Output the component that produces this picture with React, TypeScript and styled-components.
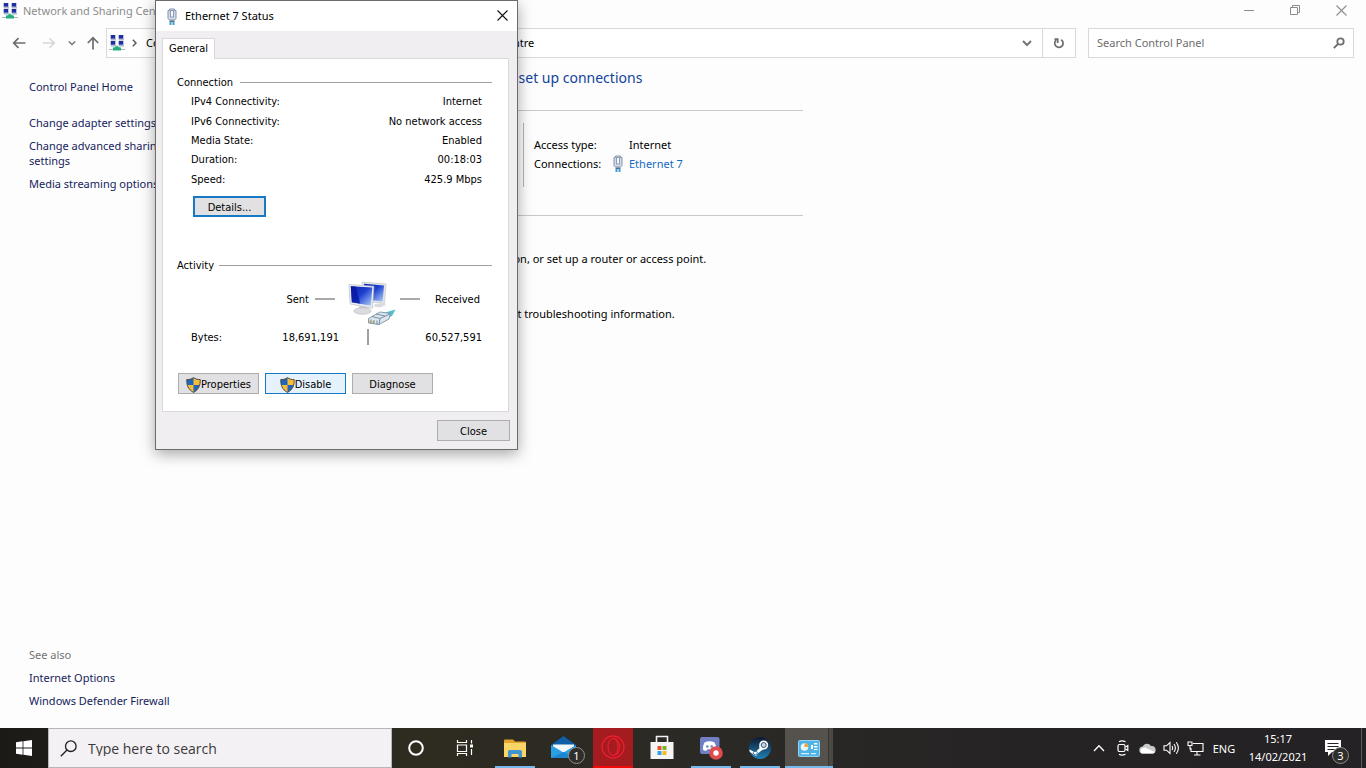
import React from 'react';
import styled, { createGlobalStyle, css } from 'styled-components';

const GlobalStyle = createGlobalStyle`
  *, *::before, *::after { box-sizing: border-box; }
  body { margin: 0; }
  button, input { font: inherit; color: inherit; }
  a { color: inherit; text-decoration: none; }
  h1, h2, p, ul { margin: 0; padding: 0; font-weight: 400; }
  ul { list-style: none; }
`;

const Desktop = styled.div`
  display: flex;
  flex-direction: column;
  min-height: 100vh;
  position: relative;
  background: #fdfdfd;
  color: #000;
  font: 11px/15px 'Noto Sans', 'Open Sans', sans-serif;
  overflow: hidden;
`;

const BareButton = styled.button`
  display: flex;
  align-items: center;
  justify-content: center;
  padding: 0;
  border: 0;
  background: none;
`;

/* ---------- Control panel window ---------- */

const ExplorerWindow = styled.main`
  flex: 1;
  display: flex;
  flex-direction: column;
`;

const WindowTitleBar = styled.header`
  display: flex;
  align-items: center;
  height: 22px;
  margin-bottom: 6px;
  padding: 0 2px 0 2px;
  gap: 5px;
  color: #8c8c8c;
`;

const WindowTitle = styled.h1`
  flex: 1;
  font-size: 11px;
  line-height: 16px;
`;

const WindowControls = styled.div`
  display: flex;
  align-self: flex-start;
`;

const WindowControl = styled(BareButton)`
  width: 46px;
  height: 20px;
`;

const NavBar = styled.nav`
  display: flex;
  height: 30px;
  padding-right: 12px;
`;

const NavArrows = styled.div`
  display: flex;
  align-items: center;
  width: 106px;
  padding-left: 12px;
`;

const NavArrow = styled(BareButton)<{ $width: number }>`
  width: ${(p) => p.$width}px;
  height: 28px;
  justify-content: flex-start;
`;

const AddressBar = styled.div`
  flex: 1;
  display: flex;
  align-items: center;
  min-width: 0;
  padding-left: 2px;
  border: 1px solid #d9d9d9;
  background: #fff;
`;

const Crumbs = styled.div`
  flex: 1;
  display: flex;
  align-items: center;
  margin-left: 7px;
  padding-bottom: 1px;
  gap: 9px;
  white-space: nowrap;
`;

const CrumbLink = styled.a`
  margin-right: 4px;
`;

const AddressButton = styled(BareButton)<{ $divided?: boolean }>`
  width: ${(p) => (p.$divided ? 33 : 31)}px;
  align-self: stretch;
  border-left: ${(p) => (p.$divided ? '1px solid #d9d9d9' : '0')};
`;

const SearchBox = styled.label`
  display: flex;
  align-items: center;
  width: 266px;
  margin-left: 12px;
  padding: 0 8px 1px;
  border: 1px solid #d9d9d9;
  background: #fff;
`;

const SearchInput = styled.input`
  flex: 1;
  min-width: 0;
  padding: 0;
  border: 0;
  outline: 0;
  background: none;
  &::placeholder { color: #6d6d6d; opacity: 1; }
`;

const Body = styled.div`
  flex: 1;
  display: flex;
`;

const Sidebar = styled.aside`
  display: flex;
  flex-direction: column;
  justify-content: space-between;
  flex: none;
  width: 193px;
  padding: 21px 12px 20px 29px;
  color: #151c5c;
`;

const LinkList = styled.ul`
  display: flex;
  flex-direction: column;
  gap: 8px;
`;

const HomeItem = styled.li`
  margin-bottom: 13px;
`;

const SeeAlsoLabel = styled.li`
  color: #747474;
`;

const Content = styled.section`
  width: 610px;
  padding: 9px 0 0 52px;
`;

const Heading = styled.h2`
  color: #10439b;
  font-size: 14px;
  line-height: 22px;
  white-space: nowrap;
`;

const ActiveNetwork = styled.div`
  display: flex;
  justify-content: flex-end;
  margin-top: 21px;
  height: 106px;
  padding-top: 12px;
  border: solid #c9c9c9;
  border-width: 1px 0;
`;

const NetworkFacts = styled.dl`
  display: grid;
  grid-template-columns: 79px 16px 1fr;
  align-content: start;
  row-gap: 4px;
  width: 280px;
  height: 64px;
  margin: 0;
  padding: 14px 0 0 10px;
  border-left: 1px solid #b5b5b5;
`;

const FactLabel = styled.dt`
  white-space: nowrap;
`;

const FactIcon = styled.span`
  display: flex;
  align-items: center;
  height: 15px;
`;

const FactValue = styled.dd`
  margin: 0;
`;

const AdapterLink = styled.a`
  color: #1769c2;
`;

const Hints = styled.div`
  display: flex;
  flex-direction: column;
  gap: 40px;
  margin-top: 35px;
  padding-left: 40px;
  white-space: nowrap;
`;

/* ---------- Status dialog ---------- */

const Dialog = styled.section`
  position: absolute;
  left: 155px;
  top: 0;
  width: 363px;
  border: 1px solid #6b6a6c;
  background: #f0eef0;
  color: #000;
  font: 11px/15px 'DejaVu Sans Condensed', 'DejaVu Sans', sans-serif;
  box-shadow: 0 4px 14px rgba(0, 0, 0, 0.34);
`;

const DialogTitleBar = styled.header`
  display: flex;
  align-items: center;
  height: 30px;
  padding-left: 11px;
  background: #fff;
  font: 11px/16px 'Noto Sans', 'Open Sans', sans-serif;
`;

const DialogTitle = styled.h2`
  flex: 1;
  margin-left: 8px;
  font-size: 11px;
`;

const DialogClose = styled(BareButton)`
  width: 30px;
  height: 28px;
  padding-bottom: 2px;
`;

const DialogBody = styled.div`
  padding: 7px 7px 8px 6px;
`;

const Tab = styled.button`
  display: block;
  position: relative;
  width: 53px;
  height: 21px;
  margin-bottom: -1px;
  padding: 0 0 2px;
  border: 1px solid #d9d8da;
  border-bottom: 0;
  background: #fff;
`;

const TabPanel = styled.div`
  height: 354px;
  margin-right: 1px;
  padding: 16px 16px 0 14px;
  border: 1px solid #d9d8da;
  background: #fff;
`;

const GroupTitle = styled.h2<{ $gap: number }>`
  display: flex;
  align-items: center;
  gap: ${(p) => p.$gap}px;
  font-size: 11px;
  line-height: 15px;
  &::after {
    content: '';
    flex: 1;
    height: 1px;
    background: #a0a0a0;
  }
`;

const StatusTable = styled.table`
  width: 291px;
  height: 97px;
  margin: 2px 0 0 14px;
  border-collapse: collapse;
  th, td { padding: 0; font-weight: 400; }
  th { text-align: left; }
  td { text-align: right; }
`;

const pushBorder = {
  plain: css`border: 1px solid #adacae; background: #e1e0e2;`,
  focused: css`border: 2px solid #1779c4; background: #e1e0e2;`,
  hover: css`border: 1px solid #1779c4; background: #e5f1fb;`,
};

const PushButton = styled.button<{ $look?: keyof typeof pushBorder; $width: number }>`
  display: flex;
  align-items: center;
  justify-content: center;
  width: ${(p) => p.$width}px;
  height: 21px;
  padding: 2px 0 0;
  ${(p) => pushBorder[p.$look ?? 'plain']}
`;

const DetailsRow = styled.div`
  margin: 7px 0 41px 16px;
`;

const Activity = styled.div`
  display: grid;
  grid-template-columns: 148px 57px 1fr;
  align-items: center;
  justify-items: end;
  margin: 8px 10px 0 14px;
`;

const Flow = styled.div`
  display: flex;
  align-items: center;
  justify-content: space-between;
  width: 100%;
`;

const SentFlow = styled(Flow)`
  justify-content: flex-end;
  gap: 6px;
  padding: 0 4px 12px 0;
`;

const ReceivedFlow = styled(Flow)`
  padding: 0 2px 12px 4px;
`;

const Dash = styled.span`
  width: 20px;
  height: 2px;
  background: #a9a9a9;
`;

const Bar = styled.span`
  justify-self: center;
  width: 2px;
  height: 16px;
  background: #a0a0a0;
`;

const ActionRow = styled.div`
  display: flex;
  gap: 6px;
  margin: 28px 0 0 1px;
`;

const DialogFooter = styled.div`
  display: flex;
  justify-content: flex-end;
  margin-top: 8px;
`;

/* ---------- Taskbar ---------- */

const Taskbar = styled.footer`
  display: flex;
  height: 40px;
  background: linear-gradient(90deg, #1c1a17 0, #2e2b20 30%, #2b2926 55%, #252324 75%, #242224 100%);
  color: #fff;
`;

const StartButton = styled(BareButton)`
  width: 48px;
`;

const TaskSearch = styled.label`
  display: flex;
  align-items: center;
  width: 344px;
  padding-left: 11px;
  gap: 11px;
  border: 1px solid #b9b7b5;
  background: #f3f1f4;
  color: #2b2b2b;
  font-family: 'Open Sans', 'Noto Sans', sans-serif;
  font-size: 14px;
`;

const TaskSearchInput = styled(SearchInput)`
  &::placeholder { color: #3a3a3a; }
`;

const SystemButton = styled(BareButton)`
  width: 48px;
`;

const PinnedApps = styled.div`
  display: flex;
  gap: 1px;
  margin-left: 3px;
`;

const AppButton = styled(BareButton)<{ $running?: boolean; $active?: boolean }>`
  position: relative;
  width: 48px;
  background: ${(p) =>
    p.$active ? 'linear-gradient(90deg, #55524e 0 43px, #37352f 43px 44px, #4a4744 44px)' : 'none'};
  &::after {
    content: '';
    display: ${(p) => (p.$running ? 'block' : 'none')};
    position: absolute;
    left: ${(p) => (p.$active ? 0 : 4)}px;
    right: ${(p) => (p.$active ? 0 : 4)}px;
    bottom: 0;
    height: 2px;
    background: #76b9ed;
  }
`;

const OperaTile = styled.span`
  display: flex;
  align-items: center;
  justify-content: center;
  width: 40px;
  height: 40px;
  background: #a41b20;
  border-bottom: 2px solid #f00a0a;
`;

const Badge = styled.span<{ $right: number }>`
  position: absolute;
  right: ${(p) => p.$right}px;
  bottom: 4px;
  width: 17px;
  height: 17px;
  border: 1px solid #8f8f8f;
  border-radius: 50%;
  background: #2f2e2b;
  font-size: 11px;
  line-height: 15px;
  text-align: center;
`;

const Tray = styled.div`
  display: flex;
  align-items: center;
  margin-left: auto;
`;

const TrayButton = styled(BareButton)`
  width: 24px;
  height: 40px;
`;

const Language = styled.button`
  width: 34px;
  height: 40px;
  padding: 0;
  border: 0;
  background: none;
`;

const Clock = styled.time`
  width: 74px;
  line-height: 18px;
  text-align: center;
`;

const Notifications = styled(BareButton)`
  position: relative;
  width: 46px;
  height: 40px;
  padding-right: 10px;
`;

const ShowDesktop = styled.button`
  width: 5px;
  height: 40px;
  padding: 0;
  border: 0;
  border-left: 1px solid #5a595a;
  background: none;
`;

/* ---------- Drawings ---------- */

const NetworkIcon = () => (
  <svg width="16" height="16" viewBox="0 0 16 16" aria-hidden="true">
    {[[1, 0], [9, 0], [1, 6], [9, 6]].map(([x, y]) => (
      <g key={`${x}-${y}`}>
        <rect x={x} y={y} width="6" height="4.4" fill="#b9c6e6" />
        <rect x={x + 1} y={y} width="4" height="3.6" fill="#1f2da0" />
        <rect x={x + 1} y={y + 4.4} width="5" height="1" fill="#8f9bb5" />
      </g>
    ))}
    <path d="M8 10.500l3.500 3H4.500z" fill="#23b07d" />
    <rect x="0" y="14" width="16" height="1" fill="#a9b5bb" />
    <rect x="4" y="12.500" width="8" height="3" fill="#23b07d" />
  </svg>
);

const PlugIcon = () => (
  <svg width="10" height="17" viewBox="0 0 10 17" aria-hidden="true">
    <path d="M1 2.500h1.500V1h5v1.500H9v8L7.500 12h-5L1 10.500z" fill="#d3dcea" stroke="#8592ab" />
    <rect x="3.500" y="2.500" width="3" height="6.500" fill="#f4f7fb" stroke="#8e9bb4" />
    <path d="M2.500 12.500h5V14h-5z" fill="#56708e" />
    <path d="M2.500 14h2v3h-2zM5.500 14h2v3h-2z" fill="#3ba0d4" />
  </svg>
);

const ShieldIcon = () => (
  <svg width="15" height="16" viewBox="0 0 15 16" aria-hidden="true">
    <path d="M7.500.600C5.500 2.200 3.200 2.700.8 2.500c-.2 5.500 1.200 10 6.700 12.900 5.500-2.900 6.900-7.400 6.700-12.900C11.800 2.700 9.500 2.200 7.500.600z" fill="#f6bd3c" />
    <path d="M7.500.600C5.500 2.200 3.200 2.700.8 2.500c0 2 .1 3.900.7 5.500h6zM7.500 8v7.400c3.200-1.700 5-4.200 6-7.400z" fill="#1f66b8" />
    <path d="M7.500.600C5.500 2.200 3.200 2.700.8 2.500c-.2 5.500 1.200 10 6.700 12.900 5.500-2.900 6.900-7.400 6.700-12.900C11.800 2.700 9.500 2.200 7.500.600z" fill="none" stroke="#4c4a45" />
  </svg>
);

const ComputersIcon = () => (
  <svg width="48" height="48" viewBox="0 0 48 48" aria-hidden="true">
    <defs>
      <linearGradient id="screen" x1="0" y1="0" x2="1" y2="1">
        <stop offset="0" stopColor="#0a1fae" />
        <stop offset=".45" stopColor="#1d3fd0" />
        <stop offset="1" stopColor="#b4d3fa" />
      </linearGradient>
    </defs>
    <path d="M14 1l24 2-1.500 19.500L16 20z" fill="#e3e5e9" stroke="#bcc0c6" strokeWidth=".6" />
    <path d="M16 2.800l20 1.600-1.300 16L18 18.500z" fill="url(#screen)" />
    <path d="M27 23l8-1 3 2-6 2.500-6-1z" fill="#d9dbde" />
    <path d="M1 3.500l25 1.700-1.500 22L2 23z" fill="#e9ebee" stroke="#b4b8be" strokeWidth=".6" />
    <path d="M2.800 5.200l21.500 1.400-1.500 18.200L3.800 21.200z" fill="url(#screen)" />
    <path d="M2.800 5.200l5 .4 4.500 17.200-8.500-1.600z" fill="#0715a0" opacity=".75" />
    <path d="M11 25l8 1.300 1 3h-8z" fill="#c3c6ca" />
    <ellipse cx="14.500" cy="30" rx="8.500" ry="3.300" fill="#dadcdf" stroke="#b3b6ba" strokeWidth=".6" />
    <path d="M34 32.500l13.500-4-3.500 6.500-5 2z" fill="#4fc0cc" />
    <path d="M20.500 37.500L32 31l10.500 1.500L41 38l-10 5.500L20.500 42z" fill="#dce6ee" stroke="#7a93a8" strokeWidth=".9" />
    <path d="M24 35.500l8 2L42 33M32 37.500l-1 6M28 33l9 2M23 38.500v4M26 39v4M29 39.500v4" fill="none" stroke="#6d879c" strokeWidth=".9" />
    <path d="M21.500 39.500H23V42h-1.500zM24.500 40H26v2.500h-1.500z" fill="#b9a85a" />
  </svg>
);

const BackArrow = ({ color }: { color: string }) => (
  <svg width="14" height="12" viewBox="0 0 14 12" fill="none" stroke={color} strokeWidth="1.700" aria-hidden="true">
    <path d="M13.500 6H2M6.500 1.200L1.700 6l4.800 4.800" />
  </svg>
);

const ForwardArrow = () => (
  <svg width="14" height="12" viewBox="0 0 14 12" fill="none" stroke="#d5d5d5" strokeWidth="1.500" aria-hidden="true">
    <path d="M1 6h11M7.500 1.200L12.300 6l-4.800 4.800" />
  </svg>
);

const UpArrow = () => (
  <svg width="14" height="14" viewBox="0 0 14 14" fill="none" stroke="#6d6d6d" strokeWidth="1.700" aria-hidden="true">
    <path d="M7 13.500V2M1.800 7L7 1.700 12.200 7" />
  </svg>
);

const Caret = ({ size, weight }: { size: number; weight: number }) => (
  <svg width={size} height={size} viewBox="0 0 10 10" fill="none" stroke="#757575" strokeWidth={weight} aria-hidden="true">
    <path d="M1 3l4 4 4-4" />
  </svg>
);

const CrumbChevron = () => (
  <svg width="5" height="8" viewBox="0 0 5 8" fill="none" stroke="#555" strokeWidth="1.400" aria-hidden="true">
    <path d="M.8.800L4 4 .8 7.200" />
  </svg>
);

const RefreshIcon = () => (
  <svg width="12" height="12" viewBox="0 0 12 12" fill="none" stroke="#6d6d6d" strokeWidth="1.700" aria-hidden="true">
    <path d="M8.200 2.700A4.200 4.200 0 1 1 3.200 3" />
    <path d="M4.700 6V2.200H1.500" />
  </svg>
);

const Magnifier = () => (
  <svg width="12" height="12" viewBox="0 0 12 12" fill="none" stroke="#6d6d6d" strokeWidth="1.800" aria-hidden="true">
    <circle cx="7.500" cy="4.500" r="3.200" />
    <path d="M5 7L.8 11.200" />
  </svg>
);

const TaskMagnifier = () => (
  <svg width="17" height="17" viewBox="0 0 17 17" fill="none" stroke="#1e1e1e" strokeWidth="1.300" aria-hidden="true">
    <circle cx="10.800" cy="6.200" r="5.300" />
    <path d="M7 10L.8 16.200" />
  </svg>
);

const WindowsLogo = () => (
  <svg width="16" height="16" viewBox="0 0 16 16" fill="#fff" aria-hidden="true">
    <path d="M0 2.200l6.600-.9v6.200H0zM7.400 1.200L16 0v7.500H7.400zM0 8.400h6.600v6.300L0 13.800zM7.400 8.400H16V16l-8.600-1.200z" />
  </svg>
);

const TaskViewIcon = () => (
  <svg width="17" height="16" viewBox="0 0 17 16" fill="none" stroke="#fff" strokeWidth="1.200" aria-hidden="true">
    <path d="M1.500 0v2.500h9V0M1.500 5v6.500h9V5zM1.500 16v-2.500h9V16M15.500 0v3.500M15.500 9v6" />
    <rect x="14" y="4.500" width="3" height="3" fill="#fff" stroke="none" />
  </svg>
);

const FolderIcon = () => (
  <svg width="22" height="19" viewBox="0 0 22 19" aria-hidden="true">
    <path d="M0 1.500Q0 .5 1 .5h8l2 2h10q1 0 1 1V8H0z" fill="#e3a52b" />
    <rect y="4" width="22" height="14" fill="#fbd467" />
    <path d="M4 18.500v-6Q4 11 5.500 11h11Q18 11 18 12.500v6h-3.500V15h-7v3.500z" fill="#3f94d3" />
  </svg>
);

const MailIcon = () => (
  <svg width="26" height="24" viewBox="0 0 26 24" aria-hidden="true">
    <path d="M0 9L12.500 0 25 9v13H0z" fill="#0f5ea8" />
    <path d="M2 8.500h21v5L12.500 19 2 13z" fill="#f4f8fb" />
    <path d="M0 9l12.500 7.500L25 9v13H0z" fill="#2b9fe3" />
    <path d="M0 22l12.500-6L25 22z" fill="#1c86d1" />
  </svg>
);

const OperaIcon = () => (
  <svg width="24" height="24" viewBox="0 0 24 24" fill="none" stroke="#ea1f2c" aria-hidden="true">
    <circle cx="12" cy="12" r="11" strokeWidth="1.300" />
    <ellipse cx="12" cy="12" rx="5" ry="8.500" strokeWidth="1.200" />
    <path d="M12 3.500c9 0 9 17 0 17" strokeWidth="1.100" />
  </svg>
);

const StoreIcon = () => (
  <svg width="24" height="26" viewBox="0 0 24 26" aria-hidden="true">
    <path d="M6.500 8V1.500h11V8" fill="none" stroke="#f2f2f2" strokeWidth="1.600" />
    <path d="M.5 7h23v17H.500z" fill="#f5f5f5" />
    <path d="M7.500 11h4v4h-4z" fill="#e5532d" />
    <path d="M12.500 11h4v4h-4z" fill="#77b52f" />
    <path d="M7.500 16h4v4h-4z" fill="#2aa3e0" />
    <path d="M12.500 16h4v4h-4z" fill="#f5b81f" />
  </svg>
);

const DiscordIcon = () => (
  <svg width="24" height="24" viewBox="0 0 24 24" aria-hidden="true">
    <path d="M1 3Q1 1 3 1h15.500Q20.500 1 20.500 3v18l-4-3H3Q1 18 1 16z" fill="#7180c4" />
    <path d="M5.500 6.500q5-2.500 10 0 2 3 1.700 7-2 1.500-3.700 1.200l-1-1.500h-4l-1 1.500q-2 .3-3.700-1.200 0-4 1.700-7z" fill="#fff" />
    <circle cx="8.300" cy="10.500" r="1.300" fill="#7180c4" />
    <circle cx="12.700" cy="10.500" r="1.300" fill="#7180c4" />
    <circle cx="17" cy="17" r="6.800" fill="#e04b50" />
    <circle cx="17" cy="17" r="2.700" fill="#fff" />
  </svg>
);

const SteamIcon = () => (
  <svg width="22" height="22" viewBox="0 0 22 22" aria-hidden="true">
    <defs>
      <linearGradient id="steam" x1="0" y1="0" x2="0" y2="1">
        <stop offset="0" stopColor="#10182f" />
        <stop offset="1" stopColor="#1f82b8" />
      </linearGradient>
    </defs>
    <circle cx="11" cy="11" r="11" fill="url(#steam)" />
    <path d="M.3 12.500l6 2.500 5-4.500 1.500 2.700-4.300 3.500Q8 20 5 18 3.500 17 3 16.200L.8 15z" fill="#fff" />
    <path d="M10 10l3-4 4 5-4.500 2.500z" fill="#fff" />
    <circle cx="14.700" cy="8" r="4.500" fill="#fff" />
    <circle cx="14.700" cy="8" r="2.500" fill="#c9d6e2" stroke="#24466b" strokeWidth=".9" />
    <circle cx="6.300" cy="15.800" r="2" fill="none" stroke="#1d5c87" strokeWidth=".8" />
  </svg>
);

const ControlPanelIcon = () => (
  <svg width="22" height="17" viewBox="0 0 22 17" aria-hidden="true">
    <rect x=".5" y=".5" width="21" height="16" rx="1" fill="#4fb3e6" stroke="#90d3f3" />
    <circle cx="6.500" cy="7" r="3.800" fill="#e9f6fc" />
    <path d="M6.500 7V3.200A3.800 3.800 0 0 1 10.300 7z" fill="#f2a33c" />
    <path d="M13 5h2v4h-2zM16 3h3.500v1.500H16zM16 6h3.500v1.500H16zM16 9h3.500v1H16z" fill="#fff" />
    <path d="M3 13h8v1.300H3zM13 13h5v1.300h-5z" fill="#d7f0fb" />
  </svg>
);

const CloudIcon = () => (
  <svg width="17" height="11" viewBox="0 0 17 11" aria-hidden="true">
    <path d="M4 10.500a3.500 3.500 0 0 1-.3-7A4.700 4.700 0 0 1 12 3a3.500 3.500 0 0 1 1.500 7.500z" fill="#c9c9c9" />
    <path d="M3 10.500A3 3 0 0 1 4 5q2-1 4 .5l8 3.500q-1 1.500-2.500 1.500z" fill="#fff" />
  </svg>
);

const MeetNowIcon = () => (
  <svg width="14" height="16" viewBox="0 0 14 16" fill="none" stroke="#fff" strokeWidth="1.200" aria-hidden="true">
    <rect x="2" y="4.500" width="7" height="7" rx="1.500" />
    <path d="M9.500 7l2.300-1.500v5L9.500 9M3 1.800Q6 0 9.500 1.800M3 14.200Q6 16 9.500 14.200" />
  </svg>
);

const VolumeIcon = () => (
  <svg width="17" height="14" viewBox="0 0 17 14" fill="none" stroke="#fff" strokeWidth="1.100" aria-hidden="true">
    <path d="M1 4.800h2.500L7 1.500v11L3.500 9.200H1z" />
    <path d="M9 5q1.300 2 0 4M11 3q2.800 4 0 8M13.300 1.200q4.200 5.800 0 11.600" />
  </svg>
);

const EthernetTrayIcon = () => (
  <svg width="17" height="15" viewBox="0 0 17 15" fill="none" stroke="#fff" strokeWidth="1.100" aria-hidden="true">
    <path d="M6 2.500h10v8H4V7M10 10.500v3M7 14h6.500" />
    <path d="M1 1h4v3.500H1zM3 4.500V8h1" />
  </svg>
);

const MessageIcon = () => (
  <svg width="16" height="16" viewBox="0 0 16 16" aria-hidden="true">
    <path d="M0 0h16v12H7l-4 4v-4H0z" fill="#fff" />
    <path d="M2.500 3.500h11M2.500 6.500h11M2.500 9.500h7" stroke="#242224" />
  </svg>
);

const CloseGlyph = ({ color }: { color: string }) => (
  <svg width="11" height="11" viewBox="0 0 11 11" fill="none" stroke={color} strokeWidth="1.100" aria-hidden="true">
    <path d="M.5.500l10 10M10.500.500l-10 10" />
  </svg>
);

const statusRows = [
  ['IPv4 Connectivity:', 'Internet'],
  ['IPv6 Connectivity:', 'No network access'],
  ['Media State:', 'Enabled'],
  ['Duration:', '00:18:03'],
  ['Speed:', '425.9 Mbps'],
];

function ControlPanel() {
  return (
    <ExplorerWindow>
      <WindowTitleBar>
        <NetworkIcon />
        <WindowTitle>Network and Sharing Centre</WindowTitle>
        <WindowControls>
          <WindowControl aria-label="Minimise">
            <svg width="10" height="10" aria-hidden="true"><path d="M0 5.500h10" stroke="#8c8c8c" /></svg>
          </WindowControl>
          <WindowControl aria-label="Restore">
            <svg width="10" height="10" fill="none" stroke="#8c8c8c" aria-hidden="true">
              <path d="M.5 2.500h7v7h-7zM2.500 2V.5h7v7H8" />
            </svg>
          </WindowControl>
          <WindowControl aria-label="Close"><CloseGlyph color="#8c8c8c" /></WindowControl>
        </WindowControls>
      </WindowTitleBar>
      <NavBar>
        <NavArrows>
          <NavArrow $width={30} aria-label="Back"><BackArrow color="#6d6d6d" /></NavArrow>
          <NavArrow $width={26} aria-label="Forward"><ForwardArrow /></NavArrow>
          <NavArrow $width={18} aria-label="Recent locations"><Caret size={8} weight={1.8} /></NavArrow>
          <NavArrow $width={14} aria-label="Up"><UpArrow /></NavArrow>
        </NavArrows>
        <AddressBar>
          <NetworkIcon />
          <Crumbs>
            <CrumbChevron />
            <CrumbLink href="#control-panel">Control Panel</CrumbLink>
            <CrumbChevron />
            <CrumbLink href="#all-items">All Control Panel Items</CrumbLink>
            <CrumbChevron />
            <CrumbLink href="#sharing">Network and Sharing Centre</CrumbLink>
          </Crumbs>
          <AddressButton aria-label="Previous locations"><Caret size={10} weight={2} /></AddressButton>
          <AddressButton $divided aria-label="Refresh"><RefreshIcon /></AddressButton>
        </AddressBar>
        <SearchBox>
          <SearchInput type="text" placeholder="Search Control Panel" aria-label="Search Control Panel" />
          <Magnifier />
        </SearchBox>
      </NavBar>
      <Body>
        <Sidebar>
          <LinkList>
            <HomeItem><a href="#home">Control Panel Home</a></HomeItem>
            <li><a href="#adapter">Change adapter settings</a></li>
            <li><a href="#advanced">Change advanced sharing settings</a></li>
            <li><a href="#media">Media streaming options</a></li>
          </LinkList>
          <LinkList>
            <SeeAlsoLabel>See also</SeeAlsoLabel>
            <li><a href="#internet-options">Internet Options</a></li>
            <li><a href="#firewall">Windows Defender Firewall</a></li>
          </LinkList>
        </Sidebar>
        <Content>
          <Heading>View your basic network information and set up connections</Heading>
          <ActiveNetwork>
            <NetworkFacts>
              <FactLabel>Access type:</FactLabel>
              <FactIcon />
              <FactValue>Internet</FactValue>
              <FactLabel>Connections:</FactLabel>
              <FactIcon><PlugIcon /></FactIcon>
              <FactValue><AdapterLink href="#ethernet">Ethernet 7</AdapterLink></FactValue>
            </NetworkFacts>
          </ActiveNetwork>
          <Hints>
            <p>Set up a broadband, dial-up or VPN connection, or set up a router or access point.</p>
            <p>Diagnose and repair network problems or get troubleshooting information.</p>
          </Hints>
        </Content>
      </Body>
    </ExplorerWindow>
  );
}

function StatusDialog() {
  return (
    <Dialog role="dialog" aria-labelledby="status-title">
      <DialogTitleBar>
        <PlugIcon />
        <DialogTitle id="status-title">Ethernet 7 Status</DialogTitle>
        <DialogClose aria-label="Close window"><CloseGlyph color="#111" /></DialogClose>
      </DialogTitleBar>
      <DialogBody>
        <Tab role="tab" aria-selected="true">General</Tab>
        <TabPanel role="tabpanel">
          <GroupTitle $gap={7}>Connection</GroupTitle>
          <StatusTable>
            <tbody>
              {statusRows.map(([label, value]) => (
                <tr key={label}>
                  <th scope="row">{label}</th>
                  <td>{value}</td>
                </tr>
              ))}
            </tbody>
          </StatusTable>
          <DetailsRow><PushButton $width={73} $look="focused">Details...</PushButton></DetailsRow>
          <GroupTitle $gap={5}>Activity</GroupTitle>
          <Activity>
            <SentFlow><span>Sent</span><Dash /></SentFlow>
            <ComputersIcon />
            <ReceivedFlow><Dash /><span>Received</span></ReceivedFlow>
            <Flow><span>Bytes:</span><span>18,691,191</span></Flow>
            <Bar />
            <span>60,527,591</span>
          </Activity>
          <ActionRow>
            <PushButton $width={81}><ShieldIcon />Properties</PushButton>
            <PushButton $width={81} $look="hover"><ShieldIcon />Disable</PushButton>
            <PushButton $width={81}>Diagnose</PushButton>
          </ActionRow>
        </TabPanel>
        <DialogFooter><PushButton $width={73}>Close</PushButton></DialogFooter>
      </DialogBody>
    </Dialog>
  );
}

function SystemTaskbar() {
  return (
    <Taskbar>
      <StartButton aria-label="Start"><WindowsLogo /></StartButton>
      <TaskSearch>
        <TaskMagnifier />
        <TaskSearchInput type="text" placeholder="Type here to search" aria-label="Type here to search" />
      </TaskSearch>
      <SystemButton aria-label="Cortana">
        <svg width="16" height="16" aria-hidden="true">
          <circle cx="8" cy="8" r="6.800" fill="none" stroke="#fff" strokeWidth="2" />
        </svg>
      </SystemButton>
      <SystemButton aria-label="Task View"><TaskViewIcon /></SystemButton>
      <PinnedApps>
        <AppButton $running aria-label="File Explorer"><FolderIcon /></AppButton>
        <AppButton aria-label="Mail"><MailIcon /><Badge $right={3}>1</Badge></AppButton>
        <AppButton aria-label="Opera"><OperaTile><OperaIcon /></OperaTile></AppButton>
        <AppButton aria-label="Microsoft Store"><StoreIcon /></AppButton>
        <AppButton $running aria-label="Discord"><DiscordIcon /></AppButton>
        <AppButton $running aria-label="Steam"><SteamIcon /></AppButton>
        <AppButton $running $active aria-label="Control Panel"><ControlPanelIcon /></AppButton>
      </PinnedApps>
      <Tray>
        <TrayButton aria-label="Show hidden icons">
          <svg width="12" height="8" fill="none" stroke="#fff" strokeWidth="1.300" aria-hidden="true">
            <path d="M1 7l5-5.200L11 7" />
          </svg>
        </TrayButton>
        <TrayButton aria-label="Meet Now"><MeetNowIcon /></TrayButton>
        <TrayButton aria-label="OneDrive"><CloudIcon /></TrayButton>
        <TrayButton aria-label="Volume"><VolumeIcon /></TrayButton>
        <TrayButton aria-label="Network"><EthernetTrayIcon /></TrayButton>
        <Language>ENG</Language>
        <Clock>15:17<br />14/02/2021</Clock>
        <Notifications aria-label="Notifications"><MessageIcon /><Badge $right={12}>3</Badge></Notifications>
        <ShowDesktop aria-label="Show desktop" />
      </Tray>
    </Taskbar>
  );
}

export default function App() {
  return (
    <Desktop>
      <GlobalStyle />
      <ControlPanel />
      <StatusDialog />
      <SystemTaskbar />
    </Desktop>
  );
}
